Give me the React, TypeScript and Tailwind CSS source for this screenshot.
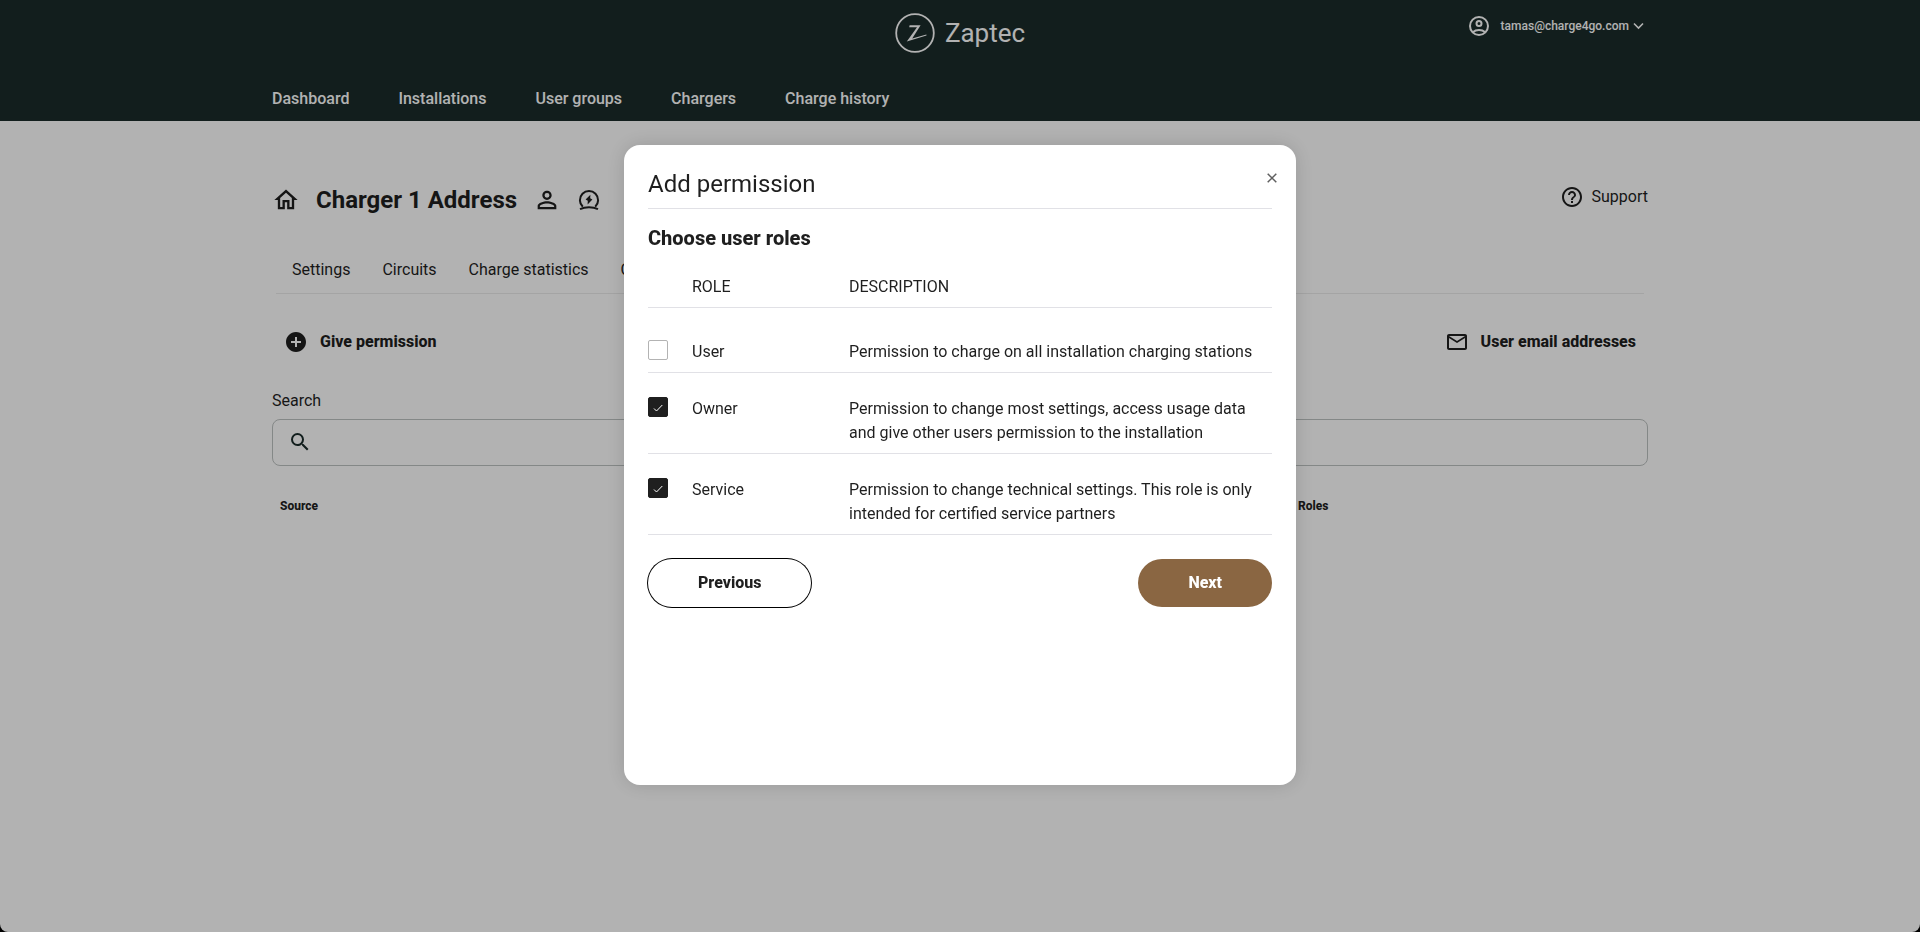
import React, { useState } from 'react';
import {
  MdAddCircle,
  MdHelpOutline,
  MdMailOutline,
  MdOutlineHome,
  MdPersonOutline,
  MdSearch,
} from 'react-icons/md';

const navLinks = ['Dashboard', 'Installations', 'User groups', 'Chargers', 'Charge history'];

const tabs = ['Settings', 'Circuits', 'Charge statistics', 'Charge history', 'Permissions'];

const roles = [
  {
    id: 'user',
    name: 'User',
    description: 'Permission to charge on all installation charging stations',
  },
  {
    id: 'owner',
    name: 'Owner',
    description:
      'Permission to change most settings, access usage data and give other users permission to the installation',
  },
  {
    id: 'service',
    name: 'Service',
    description:
      'Permission to change technical settings. This role is only intended for certified service partners',
  },
];

const Logo: React.FC = () => (
  <a href="#" className="flex items-center gap-2.5 text-white">
    <svg className="size-10" viewBox="0 0 40 40" fill="none">
      <circle cx="20" cy="20" r="18.8" stroke="currentColor" strokeWidth="1.8" />
      <path
        d="M14.6 12.2H25.6L17.2 25.4L31.4 21.6L31.5 22.5L11.8 28.6L22 14.2H14.2Z"
        fill="currentColor"
      />
    </svg>
    <span className="font-[Roboto] text-[26px] leading-8">Zaptec</span>
  </a>
);

const AccountIcon: React.FC = () => (
  <svg className="size-6" viewBox="0 0 24 24" fill="none" stroke="currentColor" strokeWidth="2">
    <circle cx="12" cy="12" r="9" />
    <circle cx="12" cy="9.5" r="2.5" />
    <path d="M5.8 18.2C7.4 16.8 9.6 16 12 16s4.6.8 6.2 2.2" />
  </svg>
);

const ChargerIcon: React.FC = () => (
  <svg className="size-6" viewBox="0 0 24 24" fill="none">
    <path d="M5.8 18.8A9.1 9.1 0 1 1 18.2 18.8" stroke="currentColor" strokeWidth="2" />
    <path d="M3 21.2C5.5 20 8.5 19.3 12 19.3s6.5.7 9 1.900" stroke="currentColor" strokeWidth="2" />
    <path d="M13.4 6.8L8.6 11.6L10.8 12.8L10.6 16.6L15.4 11.4L13.2 10.3Z" fill="currentColor" />
  </svg>
);

const Header: React.FC = () => (
  <header className="bg-[#1a2c2a] text-white">
    <div className="max-w-[1376px] mx-auto pt-[13px] pb-2.5">
      <div className="grid grid-cols-3 items-start">
        <div />
        <div className="flex justify-center">
          <Logo />
        </div>
        <div className="flex justify-end">
          <button className="flex items-center h-[26px] pr-1 text-xs font-medium">
            <AccountIcon />
            <span className="ml-2.5 mr-1">tamas@charge4go.com</span>
            <svg className="w-[11px] h-2" viewBox="0 0 11 8" fill="none" stroke="currentColor" strokeWidth="1.6">
              <path d="M1 1.5L5.5 6L10 1.5" />
            </svg>
          </button>
        </div>
      </div>
      <nav className="flex gap-[49px] mt-[34px] font-medium">
        {navLinks.map((link) => (
          <a key={link} href="#">
            {link}
          </a>
        ))}
      </nav>
    </div>
  </header>
);

const InstallationPage: React.FC = () => (
  <main className="max-w-[1376px] mx-auto pt-[62px]">
    <div className="flex justify-between items-start">
      <div className="flex items-center h-[34px]">
        <MdOutlineHome size={28} />
        <h1 className="ml-4 mr-4 text-2xl font-bold">Charger 1 Address</h1>
        <MdPersonOutline size={28} />
        <span className="ml-4">
          <ChargerIcon />
        </span>
      </div>
      <a href="#" className="flex items-center gap-2 h-7">
        <MdHelpOutline size={24} />
        Support
      </a>
    </div>

    {/* Tabs */}
    <nav className="flex gap-8 mx-1 mt-[41px] px-4 pb-[11px] border-b border-[#ebebeb]">
      {tabs.map((tab) => (
        <a key={tab} href="#">
          {tab}
        </a>
      ))}
    </nav>

    {/* Actions */}
    <div className="flex justify-between items-center h-6 mt-9 px-3 font-extrabold">
      <button className="flex items-center gap-3">
        <MdAddCircle size={24} />
        Give permission
      </button>
      <button className="flex items-center gap-3">
        <MdMailOutline size={24} />
        User email addresses
      </button>
    </div>

    <label htmlFor="search" className="block mt-[35px]">
      Search
    </label>
    <div className="flex items-start h-[47px] mt-1.5 px-[15px] pt-2.5 border border-[#bec3c2] rounded-lg">
      <MdSearch size={24} className="text-[#1a2c2a]" />
      <input id="search" type="text" className="grow ml-3 bg-transparent outline-none" />
    </div>

    <table className="w-full mt-7 table-fixed text-left text-xs">
      <thead>
        <tr>
          <th className="w-[1018px] px-2 py-1 font-extrabold">Source</th>
          <th className="px-2 py-1 font-extrabold">Roles</th>
        </tr>
      </thead>
    </table>
  </main>
);

const PermissionModal: React.FC = () => {
  const [selected, setSelected] = useState<string[]>(['owner', 'service']);

  const toggleRole = (id: string) => {
    setSelected((prev) => (prev.includes(id) ? prev.filter((r) => r !== id) : [...prev, id]));
  };

  return (
    <div className="fixed inset-0 flex justify-center items-start pt-[145px] bg-black/30">
      <div
        role="dialog"
        aria-labelledby="modal-title"
        className="w-full max-w-2xl min-h-[640px] px-6 bg-white rounded-2xl shadow-[0_0_20px_rgba(0,0,0,0.15)]"
      >
        <div className="flex justify-between items-start pt-[21px] pb-[6px] border-b border-[#e1e1e6]">
          <h2 id="modal-title" className="text-2xl leading-9">
            Add permission
          </h2>
          <button aria-label="Close" className="flex items-center justify-center size-6 -mr-3">
            <svg className="size-2.5" viewBox="0 0 10 10" fill="none" stroke="#5f5f5f" strokeWidth="1.5">
              <path d="M0.7 0.7L9.3 9.3M9.3 0.7L0.7 9.3" />
            </svg>
          </button>
        </div>

        <h3 className="mt-[15px] text-xl font-extrabold">Choose user roles</h3>

        <table className="w-full mt-[23px] table-fixed text-left">
          <thead>
            <tr className="border-b border-[#e1e1e6]">
              <th className="w-11"></th>
              <th className="w-[157px] pb-2 font-normal">ROLE</th>
              <th className="pb-2 font-normal">DESCRIPTION</th>
            </tr>
          </thead>
          <tbody>
            {roles.map((role) => (
              <tr key={role.id} className="group border-b border-[#e1e1e6] align-top">
                <td className="pt-6 pb-2 group-first:pt-8">
                  <span className="relative block size-5">
                    <input
                      id={role.id}
                      type="checkbox"
                      checked={selected.includes(role.id)}
                      onChange={() => toggleRole(role.id)}
                      className="peer block appearance-none size-5 border border-[#b3b3b3] rounded-xs checked:bg-[#1f1f1f] checked:border-[#1f1f1f]"
                    />
                    <svg
                      className="absolute inset-0 hidden size-5 pointer-events-none peer-checked:block"
                      viewBox="0 0 20 20"
                      fill="none"
                      stroke="white"
                      strokeWidth="1"
                    >
                      <path d="M6 11.5L8.5 14L14.3 8" />
                    </svg>
                  </span>
                </td>
                <td className="pt-6 pb-2 group-first:pt-8">
                  <label htmlFor={role.id}>{role.name}</label>
                </td>
                <td className="pt-6 pb-2 group-first:pt-8">{role.description}</td>
              </tr>
            ))}
          </tbody>
        </table>

        <div className="flex justify-between mt-6 font-extrabold">
          <button className="h-12 px-[50px] rounded-full ring-1 ring-black">Previous</button>
          <button className="h-12 px-[50px] rounded-full bg-[#8a6642] text-white">Next</button>
        </div>
      </div>
    </div>
  );
};

const App: React.FC = () => {
  return (
    <div className="bg-black font-[Roboto,sans-serif] text-base text-[#1f1f1f]">
      <div className="min-h-screen bg-white rounded-b-lg">
        <Header />
        <InstallationPage />
      </div>
      <PermissionModal />
    </div>
  );
};

export default App;
